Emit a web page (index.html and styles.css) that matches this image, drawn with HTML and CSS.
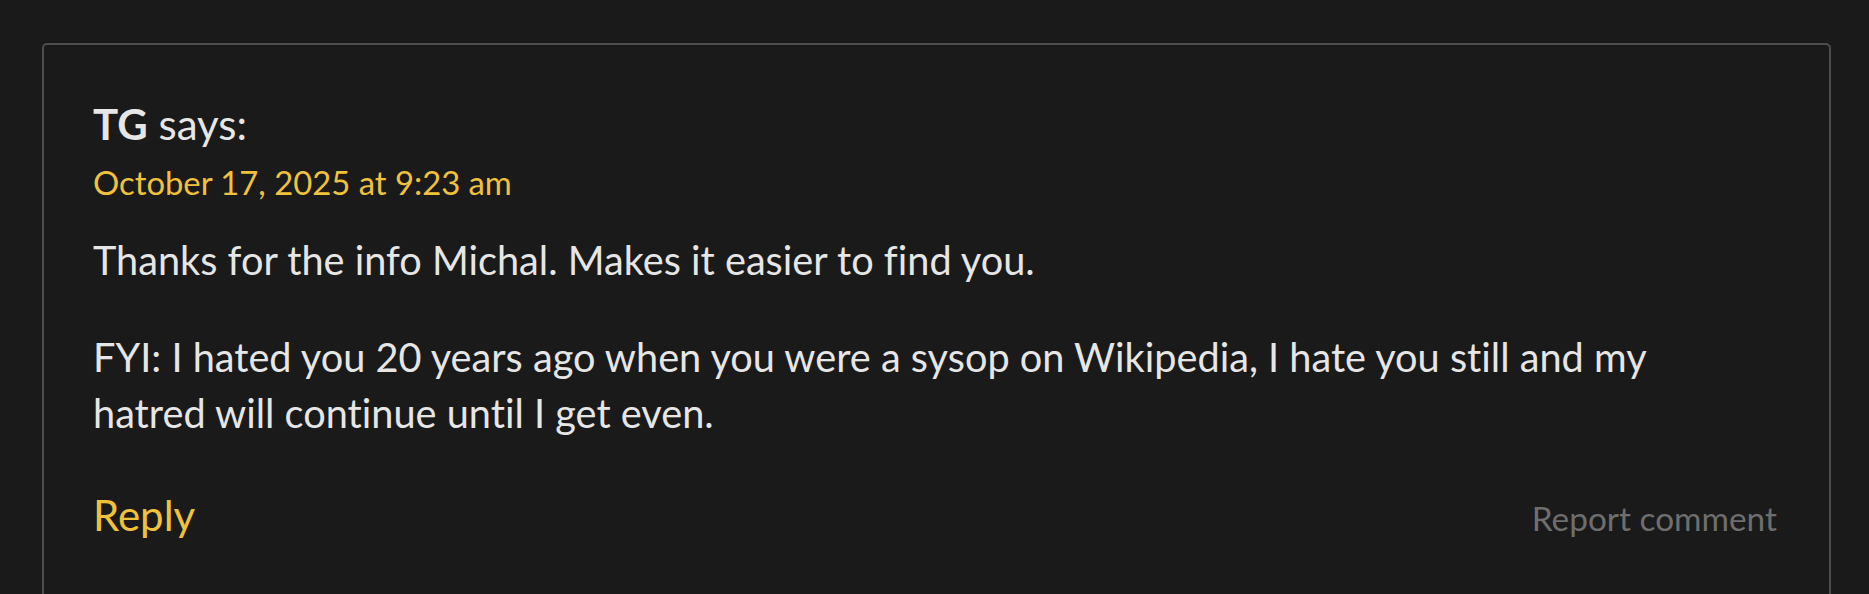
FILE: index.html
```html
<!DOCTYPE html>
<html lang="en">
<head>
<meta charset="utf-8">
<title>Comment</title>
<link rel="stylesheet" href="styles.css">
</head>
<body>
<article class="comment">
  <header class="comment-meta">
    <div class="comment-author"><b class="fn">TG</b> <span class="says">says:</span></div>
    <div class="comment-date"><a href="#">October 17, 2025 at 9:23 am</a></div>
  </header>
  <div class="comment-content">
    <p>Thanks for the info Michal. Makes it easier to find you.</p>
    <p>FYI: I hated you 20 years ago when you were a sysop on Wikipedia, I hate you still and my hatred will continue until I get even.</p>
  </div>
  <footer class="comment-actions">
    <a class="reply" href="#">Reply</a>
    <a class="report" href="#">Report comment</a>
  </footer>
</article>
</body>
</html>
```
FILE: styles.css
```css
html, body {
  margin: 0;
  padding: 0;
  background: #1a1a1a;
}
body {
  font-family: "Lato", "Liberation Sans", sans-serif;
  font-variant-ligatures: no-common-ligatures;
  color: #e6e6e6;
  overflow: hidden;
  height: 594px;
}
a { text-decoration: none; }

.comment {
  margin: 43px 38px 0 42px;
  border: 2px solid #4d4d4d;
  border-radius: 5px;
  padding: 54px 52px 60px 49px;
}
.comment-author {
  font-size: 42px;
  line-height: 50px;
  color: #e6e6e6;
}
.comment-author .fn { font-weight: 700; }
.comment-date {
  margin-top: 14px;
  font-size: 32.8px;
  line-height: 40px;
}
.comment-date a { color: #f0c23c; }

.comment-content {
  margin-top: 29px;
  font-size: 39.7px;
  line-height: 56.5px;
}
.comment-content p {
  margin: 0;
  max-width: 1640px;
}
.comment-content p + p { margin-top: 40px; }

.comment-actions {
  margin-top: 48px;
  display: flex;
  justify-content: space-between;
  align-items: baseline;
}
.reply {
  font-size: 42px;
  line-height: 50px;
  color: #f0c23c;
}
.report {
  font-size: 33.4px;
  line-height: 40px;
  color: #6e6e6e;
}
```
